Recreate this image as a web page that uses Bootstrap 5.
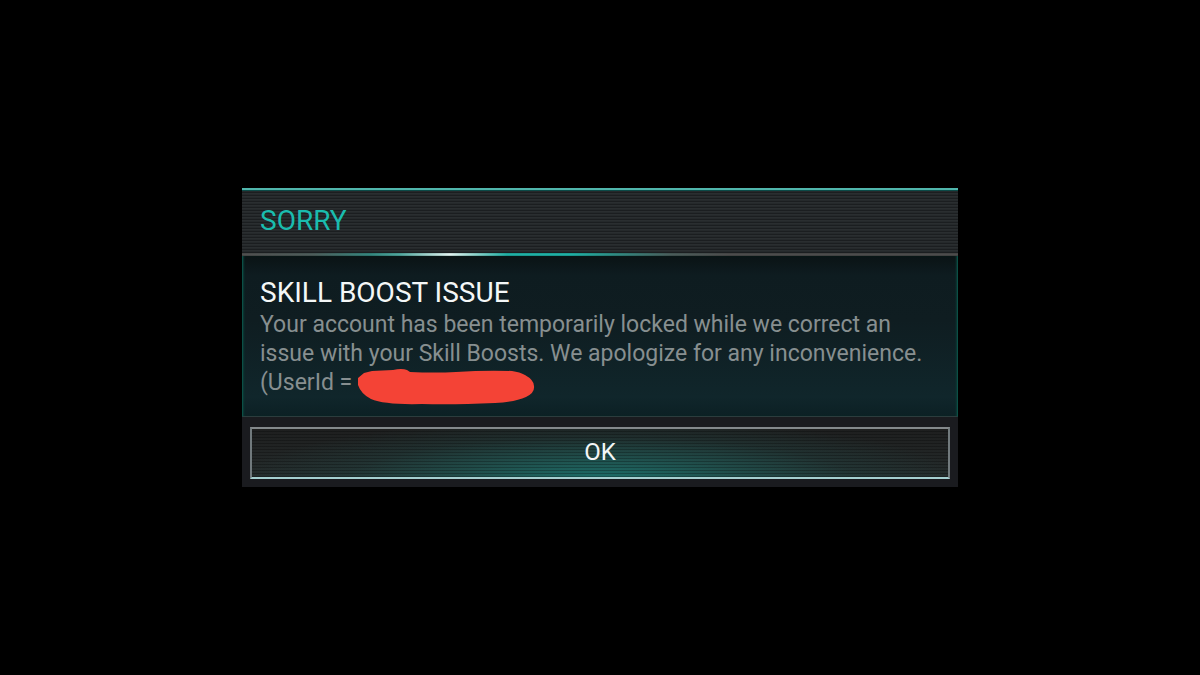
<!DOCTYPE html>
<html lang="en">
<head>
<meta charset="utf-8">
<meta name="viewport" content="width=device-width, initial-scale=1">
<title>Skill Boost Issue</title>
<link href="https://cdn.jsdelivr.net/npm/bootstrap@5.3.0/dist/css/bootstrap.min.css" rel="stylesheet">
<style>
  body { background: #000; font-family: Roboto, "Liberation Sans", sans-serif; }
  .notice { max-width: 716px; background: #1a1b1f; }
  .notice-head {
    border-top: 2px solid #50b5ac;
    box-shadow: inset 0 1px #0b4a47;
    background: repeating-linear-gradient(#2a2e30 0 1px, #25292b 1px 2px, #1b1e20 2px 3px);
    padding: 15px 18px 16px;
  }
  .notice-title { color: #1abcae; font-size: 28px; line-height: 32px; font-weight: 400; }
  .notice-rule {
    height: 3px;
    background:
      linear-gradient(rgba(0, 0, 0, .1) 0 1px, transparent 1px 2px, rgba(0, 0, 0, .15) 2px),
      linear-gradient(90deg, #4f4f4f 0, #4d5d5b 10%, #34877f 18%, #4fa79e 22%, #e2f5f2 29%, #9bd8d1 32%, #1fb0a5 37%, #1fb0a5 46%, #2f8b83 52%, #4a5c5a 60%, #4c4c4c 68%);
  }
  .notice-body {
    border: solid #0b4f46;
    border-width: 0 1px;
    border-bottom: 1px solid #2c3c3d;
    box-shadow: inset 2px 0 2px -1px #0b3c36, inset -2px 0 2px -1px #0b3c36;
    background: linear-gradient(#0a1315, #0e1c20 12%, #0f1d21 40%, #10262b 88%, #0c2024);
    padding: 19px 17px;
  }
  .notice-heading { color: #f4f7f7; font-size: 28px; line-height: 35px; font-weight: 400; }
  .notice-text { color: #878f90; font-size: 23px; line-height: 29px; }
  .scribble { width: 178px; height: 36px; left: 97px; top: 1px; }
  .notice-foot { padding: 10px 8px 8px; }
  .btn-ok {
    color: #f2f6f6;
    font-size: 24px;
    line-height: 28px;
    padding: 9px 10px 11px;
    border: 2px solid;
    border-color: #84898c #717a7d #a5cfd0 #717a7d;
    background:
      repeating-linear-gradient(transparent 0 2px, rgba(0, 0, 0, .25) 2px 3px),
      radial-gradient(ellipse 52% 125% at 50% 105%, #1c6f6a, rgba(31, 90, 86, .7) 40%, rgba(31, 76, 74, .3) 70%, transparent),
      linear-gradient(#1e1f1f, #252b2b);
    background-clip: padding-box;
  }
  .btn-ok:hover, .btn-ok:active { color: #fff !important; }
</style>
</head>
<body>
<main class="container-fluid min-vh-100 d-flex align-items-center justify-content-center">
  <section class="notice w-100" role="alertdialog" aria-labelledby="title" aria-describedby="message">
    <header class="notice-head"><h1 class="notice-title mb-0" id="title">SORRY</h1></header>
    <div class="notice-rule"></div>
    <div class="notice-body" id="message">
      <h2 class="notice-heading mb-0">SKILL BOOST ISSUE</h2>
      <p class="notice-text mb-0">Your account has been temporarily locked while we correct an<br>issue with your Skill Boosts. We apologize for any inconvenience.</p>
      <p class="notice-text position-relative mb-0">(UserId =
        <svg class="scribble position-absolute" viewBox="0 0 178 36" aria-hidden="true"><path fill="#f44336" d="M1 9 L7 4 L15 2 L36 1 Q45 -1 50 1 L53 3 Q78 4 99 3 Q128 1 155 2 Q163 3 168 6 Q177 11 177 17 Q178 24 169 28 Q158 33 138 34 Q95 36 65 35 Q28 36 14 30 Q4 25 1 16 Z"/></svg>
      </p>
    </div>
    <footer class="notice-foot"><button type="button" class="btn btn-ok w-100 d-block rounded-0">OK</button></footer>
  </section>
</main>
<script src="https://cdn.jsdelivr.net/npm/bootstrap@5.3.0/dist/js/bootstrap.bundle.min.js"></script>
</body>
</html>
